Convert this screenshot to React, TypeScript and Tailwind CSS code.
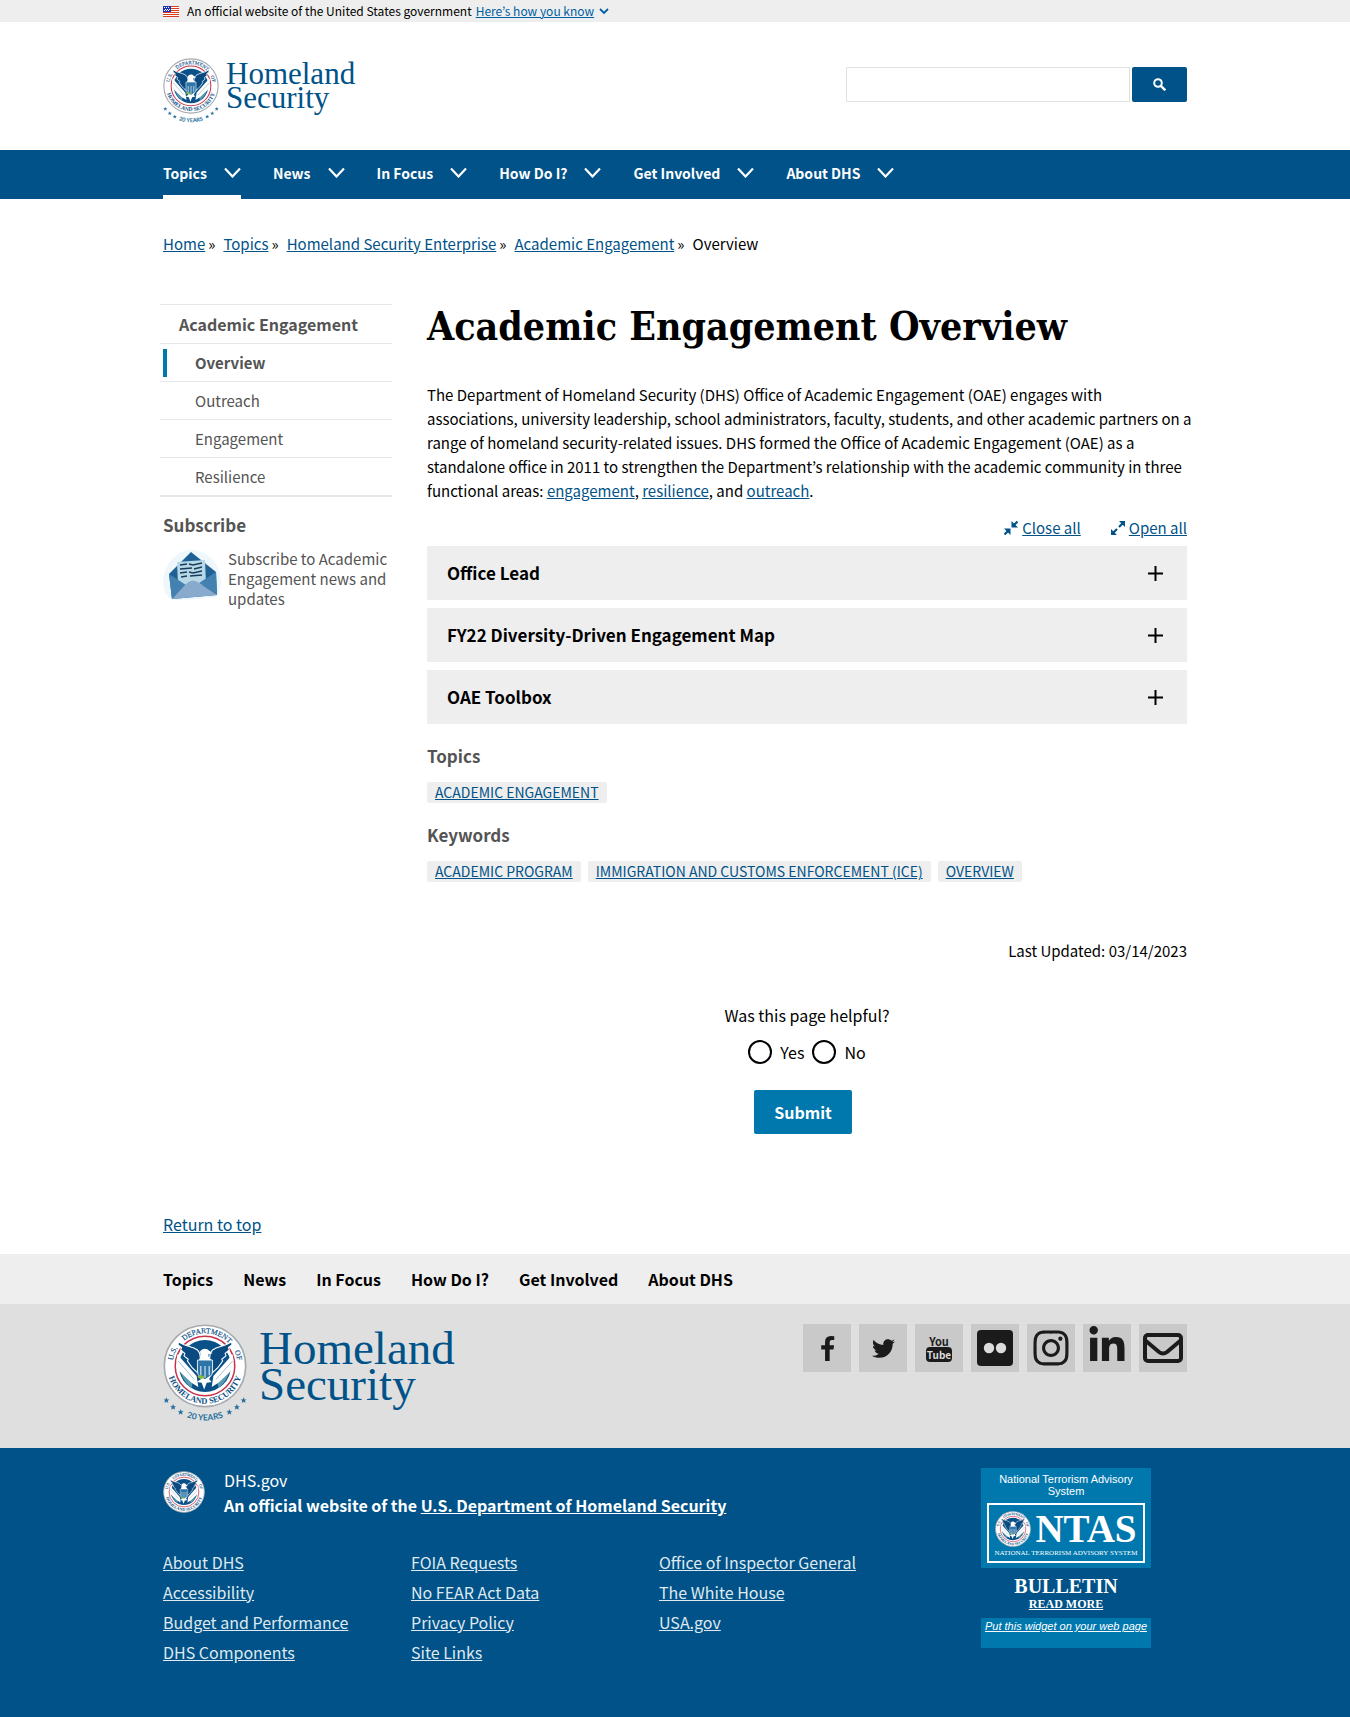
import { useId } from "react";
import type { ReactNode } from "react";
import { FaTwitter, FaInstagram, FaLinkedinIn } from "react-icons/fa";

const topics = ["Topics", "News", "In Focus", "How Do I?", "Get Involved", "About DHS"];
const crumbs = ["Home", "Topics", "Homeland Security Enterprise", "Academic Engagement"];
const linkColumns = [
  ["About DHS", "Accessibility", "Budget and Performance", "DHS Components"],
  ["FOIA Requests", "No FEAR Act Data", "Privacy Policy", "Site Links"],
  ["Office of Inspector General", "The White House", "USA.gov"],
];

function Seal({ className, years = false }: { className: string; years?: boolean }) {
  const id = useId();
  return (
    <svg className={className} viewBox={years ? "0 0 100 118" : "0 0 100 100"} role="img" aria-label="U.S. Department of Homeland Security seal">
      <defs>
        <path id={`${id}t`} d="M50 89a39 39 0 0 1 0-78a39 39 0 0 1 0 78" />
        <path id={`${id}b`} d="M5 50a45 45 0 0 0 90 0" />
        <path id={`${id}y`} d="M-15 50a65 65 0 0 0 130 0" />
      </defs>
      <circle cx="50" cy="50" r="48.5" fill="#fff" stroke="#a7abaf" strokeWidth="2" />
      <circle cx="50" cy="50" r="35.5" fill="#fff" stroke="#c8324a" strokeWidth="1.8" />
      <circle cx="50" cy="50" r="31" fill="#0b5189" />
      <path d="M20 52c8 2 12 10 16 14l-2 10c-8-6-13-15-14-24zM80 52c-8 2-12 10-16 14l2 10c8-6 13-15 14-24z" fill="#5b9bb0" />
      <path d="M17 36 40 62l2 13-8-5-15-14-3-12zM83 36 60 62l-2 13 8-5 15-14 3-12z" fill="#fff" />
      <path d="M18 44l19 22M83 44 63 66" stroke="#8fb1ca" strokeWidth="1" />
      <path d="M18 21c8 6 16 5 23 10 4 4 4 9 3 15l-3 12c-5-4-9-9-12-14l1-2-5-4 1-3-5-4 1-3-4-3zM82 21c-8 6-16 5-23 10-4 4-4 9-3 15l3 12c5-4 9-9 12-14l-1-2 5-4-1-3 5-4-1-3 4-3z" fill="#0a4a80" stroke="#fff" strokeWidth="1.3" />
      <path d="M43 43c2-4 2-7 1-10 2-4 8-5 11-1l4 3-5 1c0 3 1 5 4 7l-8 4z" fill="#fff" />
      <path d="M41 43h18v13c0 6-5 9-9 11-4-2-9-5-9-11z" fill="#2d74a8" stroke="#fff" strokeWidth="1" />
      <path d="M45 50v11M50 50v14M55 50v11" stroke="#d5e5ef" strokeWidth="1.4" />
      <path d="m44 62 6 4 7-5-2 5 3 3-6 1-3 8-3-8-6-1 5-3z" fill="#fff" />
      <path d="M41 63c3-3 7-2 9 1-3 2-7 2-9-1z" fill="#86b840" />
      <g fill="#0b4f86" fontFamily="'Liberation Serif', serif" textAnchor="middle">
        <g fontSize="9" stroke="#0b4f86" strokeWidth="0.2">
          <text><textPath href={`#${id}t`} startOffset="51%">DEPARTMENT</textPath></text>
          <text><textPath href={`#${id}t`} startOffset="31%">U.S.</textPath></text>
          <text><textPath href={`#${id}t`} startOffset="70%">OF</textPath></text>
        </g>
        <text fontSize="10" fontWeight="700"><textPath href={`#${id}b`} startOffset="50%">HOMELAND SECURITY</textPath></text>
      </g>
      {years && (
        <g fill="#27709d">
          <text fontFamily="Lato, sans-serif" fontWeight="700" fontSize="10" textAnchor="middle">
            <textPath href={`#${id}y`} startOffset="50%">20 YEARS</textPath>
          </text>
          {[[4, 91], [12, 99], [21, 105], [96, 91], [88, 99], [79, 105]].map(([x, y]) => (
            <path key={x} transform={`translate(${x} ${y})`} d="M0-3.6 1.1-1.1h2.5L1.6.5 2.2 3.1 0 1.6-2.2 3.1-1.6.5-3.6-1.1H-1.1z" />
          ))}
        </g>
      )}
    </svg>
  );
}

function Flag() {
  return (
    <svg className="h-[11px] w-4" viewBox="0 0 16 11" aria-hidden="true">
      <path fill="#fff" d="M0 0h16v11H0z" />
      <path stroke="#db3e1f" d="M0 .5h16M0 2.5h16M0 4.5h16M0 6.5h16M0 8.5h16M0 10.5h16" />
      <path fill="#1e33b1" d="M0 0h8v6H0z" />
      <path stroke="#fff" strokeDasharray="1 1" d="M1 1.5h6M2 3.5h5M1 4.5h6" />
    </svg>
  );
}

function Envelope() {
  return (
    <svg className="h-[52px] w-[59px] shrink-0" viewBox="0 0 59 52" aria-hidden="true">
      <path d="M2 22C8 6 20 0 30 1s24 8 27 24-2 24-10 24-30 4-38 1S-2 34 2 22z" fill="#eef7fc" />
      <path d="M28 3 6 25l3 25 45-4-1-23z" fill="#1f6195" />
      <path d="m14 13 28-2 1 24-13 6-15-6z" fill="#b9d8e6" />
      <path d="m17 16 7-1M26 15l4 1 9-2M17 20l12-1M31 20l8-2M17 24l7-1M26 23l4 1 9-2M18 28l6-1M27 27l12-1" stroke="#163d5c" strokeWidth="1.4" fill="none" />
      <path d="m6 25 17 11L9 50zM53 23 36 34l18 12z" fill="#4481b0" />
      <path d="M9 50 24 34q6-5 12 0l18 12z" fill="#88abcd" />
    </svg>
  );
}

function Chevron() {
  return (
    <svg className="h-[11px] w-[17px]" viewBox="0 0 17 11" fill="none" stroke="currentColor" strokeWidth="2.2" aria-hidden="true">
      <path d="m1 1.5 7.5 8L16 1.5" />
    </svg>
  );
}

function DiagonalArrows({ inward = false }: { inward?: boolean }) {
  return (
    <svg className="h-3.5 w-3.5" viewBox="0 0 14 14" fill="#005288" stroke="#005288" strokeWidth="2.2" aria-hidden="true">
      {inward ? (
        <>
          <path d="m13.5.5-4 4M.5 13.5l4-4" />
          <path stroke="none" d="M7.5 0v6.5H14zM6.5 14V7.5H0z" />
        </>
      ) : (
        <>
          <path d="m12 2-4 4M2 12l4-4" />
          <path stroke="none" d="M8 0h6v6zM6 14H0V8z" />
        </>
      )}
    </svg>
  );
}

function Tag({ children }: { children: string }) {
  return (
    <a href="#" className="rounded-xs bg-[#eee] px-2 text-[14px] leading-[21px] text-[#005288] uppercase underline">
      {children}
    </a>
  );
}

const social = [
  {
    name: "Facebook",
    icon: (
      <svg className="size-[27px]" viewBox="0 -64 1792 1792" fill="currentColor" aria-hidden="true">
        <path d="M1343 12v264h-157q-86 0-116 36t-30 108v189h293l-39 296h-254v759H734V905H479V609h255V391q0-186 104-288.500T1115 0q147 0 228 12z" />
      </svg>
    ),
  },
  { name: "Twitter", icon: <FaTwitter className="size-[23px]" /> },
  {
    name: "YouTube",
    icon: (
      <span className="flex flex-col items-center text-[11px] leading-3 font-bold" aria-hidden="true">
        <span>You</span>
        <span className="rounded-sm bg-[#1b1b1b] px-px text-[10px] leading-[15px] text-[#dcdcdc]">Tube</span>
      </span>
    ),
  },
  {
    name: "Flickr",
    icon: (
      <svg className="size-9" viewBox="0 0 36 36" aria-hidden="true">
        <rect width="36" height="36" rx="4" fill="#1b1b1b" />
        <circle cx="12" cy="18" r="5.2" fill="#dcdcdc" />
        <circle cx="24" cy="18" r="5.2" fill="#dcdcdc" />
      </svg>
    ),
  },
  { name: "Instagram", icon: <FaInstagram className="size-10" /> },
  { name: "LinkedIn", icon: <FaLinkedinIn className="mb-1 size-10" /> },
  {
    name: "Email",
    icon: (
      <svg className="h-[30px] w-10" viewBox="0 0 40 30" fill="none" stroke="#1b1b1b" strokeWidth="4" strokeLinejoin="round" aria-hidden="true">
        <rect x="2" y="2" width="36" height="26" rx="3" />
        <path d="m3 8 13 11q4 3 8 0L37 8" />
      </svg>
    ),
  },
];

function Wrap({ children, className = "" }: { children: ReactNode; className?: string }) {
  return <div className={`mx-auto max-w-5xl ${className}`}>{children}</div>;
}

export default function App() {
  return (
    <div className="bg-white font-['Noto_Sans_CJK_KR',sans-serif] text-[15px] leading-6 text-black">
      <div className="bg-[#eee]">
        <Wrap className="flex items-center text-[12px] leading-[22px]">
          <Flag />
          <span className="ml-2">An official website of the United States government</span>
          <button className="ml-1 flex items-center gap-1 text-[#005ea2]">
            <span className="underline">Here’s how you know</span>
            <svg className="h-2 w-3" viewBox="0 0 12 8" fill="none" stroke="currentColor" strokeWidth="1.8" aria-hidden="true">
              <path d="m2 2 4 4 4-4" />
            </svg>
          </button>
        </Wrap>
      </div>

      <header>
        <Wrap className="flex h-32 items-start justify-between pt-9">
          <a href="#" className="flex gap-[7px] text-[#005288]">
            <Seal years className="h-[66px] w-14" />
            <span className="mt-1 font-['Liberation_Serif',serif] text-[31px] leading-6">
              Homeland
              <br />
              Security
            </span>
          </a>
          <form className="mt-[9px] flex gap-0.5" onSubmit={(e) => e.preventDefault()}>
            <input aria-label="Search" className="h-[35px] w-[284px] border border-[#dfe1e2] px-2" />
            <button aria-label="Search" className="flex h-[35px] w-[55px] items-center justify-center rounded-xs bg-[#005288] text-white">
              <svg className="size-[13px]" viewBox="0 0 13 13" fill="none" stroke="currentColor" strokeWidth="2" aria-hidden="true">
                <circle cx="5" cy="5" r="3.8" />
                <path d="m7.800 7.800 4.500 4.500" strokeWidth="2.4" />
              </svg>
            </button>
          </form>
        </Wrap>
        <nav className="bg-[#005288]" aria-label="Primary">
          <Wrap className="flex gap-8">
            {topics.map((t, i) => (
              <button
                key={t}
                className={`flex h-[49px] items-center gap-[17px] border-b-4 text-[14px] font-bold text-white ${i === 0 ? "border-white" : "border-transparent"}`}
              >
                {t}
                <Chevron />
              </button>
            ))}
          </Wrap>
        </nav>
      </header>

      <Wrap>
        <nav aria-label="Breadcrumb" className="flex pt-[33px]">
          {crumbs.map((c) => (
            <span key={c} className="mr-2">
              <a href="#" className="text-[#005288] underline">{c}</a>
              <span className="ml-[3px]">»</span>
            </span>
          ))}
          <span>Overview</span>
        </nav>

        <div className="mt-12 grid grid-cols-[229px_1fr] gap-x-[35px]">
          <aside className="text-[#545454]">
            <ul className="-ml-[3px] border-t border-b-2 border-[#e6e7e8]">
              <li className="flex h-[38px] items-center pl-[19px] text-[16px] font-bold">
                <a href="#">Academic Engagement</a>
              </li>
              {["Overview", "Outreach", "Engagement", "Resilience"].map((s, i) => (
                <li key={s} className="flex h-[38px] items-center border-t border-[#e6e7e8] pl-[3px]">
                  <a href="#" className={`border-l-4 pl-7 leading-7 ${i === 0 ? "border-[#0078ae] font-bold" : "border-transparent"}`}>
                    {s}
                  </a>
                </li>
              ))}
            </ul>
            <h2 className="mt-4 text-[17px] font-bold">Subscribe</h2>
            <a href="#" className="mt-3 flex gap-1.5 leading-5">
              <Envelope />
              <span>Subscribe to Academic Engagement news and updates</span>
            </a>
          </aside>

          <main>
            <h1 className="font-['DejaVu_Serif_Condensed','DejaVu_Serif',serif] text-[39px] leading-[44px] font-bold">
              Academic Engagement Overview
            </h1>
            <p className="mt-[35px] -mr-2">
              The Department of Homeland Security (DHS) Office of Academic Engagement (OAE) engages with associations, university leadership, school administrators, faculty, students, and other academic partners on a range of homeland security-related issues. DHS formed the Office of Academic Engagement (OAE) as a standalone office in 2011 to strengthen the Department’s relationship with the academic community in three functional areas:{" "}
              <a href="#" className="text-[#005288] underline">engagement</a>,{" "}
              <a href="#" className="text-[#005288] underline">resilience</a>, and{" "}
              <a href="#" className="text-[#005288] underline">outreach</a>.
            </p>
            <div className="mt-[13px] flex justify-end gap-[30px] text-[#005288]">
              <button className="flex items-center gap-1">
                <DiagonalArrows inward />
                <span className="underline">Close all</span>
              </button>
              <button className="flex items-center gap-1">
                <DiagonalArrows />
                <span className="underline">Open all</span>
              </button>
            </div>
            <div className="mt-[6px] flex flex-col gap-2">
              {["Office Lead", "FY22 Diversity-Driven Engagement Map", "OAE Toolbox"].map((t) => (
                <h2 key={t}>
                  <button className="flex h-[54px] w-full items-center justify-between bg-[#eee] pr-6 pl-5 text-[17px] font-bold">
                    {t}
                    <svg className="size-[15px]" viewBox="0 0 15 15" stroke="#000" strokeWidth="2" aria-hidden="true">
                      <path d="M7.500 0v15M0 7.500h15" />
                    </svg>
                  </button>
                </h2>
              ))}
            </div>
            <h2 className="mt-5 text-[17px] font-bold text-[#545454]">Topics</h2>
            <div className="mt-[14px] flex gap-[7px]">
              <Tag>Academic Engagement</Tag>
            </div>
            <h2 className="mt-5 text-[17px] font-bold text-[#545454]">Keywords</h2>
            <div className="mt-[14px] flex gap-[7px]">
              <Tag>Academic Program</Tag>
              <Tag>Immigration and Customs Enforcement (ICE)</Tag>
              <Tag>Overview</Tag>
            </div>
            <p className="mt-[57px] text-right">Last Updated: 03/14/2023</p>
            <form className="mt-10 flex flex-col items-center" onSubmit={(e) => e.preventDefault()}>
              <fieldset className="text-[16px]">
                <legend>Was this page helpful?</legend>
                <div className="mt-[13px] flex justify-center gap-2">
                  {["Yes", "No"].map((v) => (
                    <label key={v} className="flex items-center gap-2">
                      <input type="radio" name="helpful" className="size-6 appearance-none rounded-full border-2 border-black bg-white" />
                      {v}
                    </label>
                  ))}
                </div>
              </fieldset>
              <button className="mt-[26px] mr-2 h-11 rounded-xs bg-[#0078ae] px-5 text-[16px] font-bold text-white">Submit</button>
            </form>
          </main>
        </div>
        <div className="mt-[78px] pb-[17px]">
          <a href="#" className="text-[16px] text-[#005288] underline">Return to top</a>
        </div>
      </Wrap>

      <footer>
        <nav className="bg-[#eee]" aria-label="Footer">
          <Wrap className="flex h-[50px] items-center gap-[30px] text-[16px] font-bold">
            {topics.map((t) => (
              <a key={t} href="#">{t}</a>
            ))}
          </Wrap>
        </nav>
        <div className="bg-[#dfdfdf]">
          <Wrap className="flex h-36 items-start justify-between pt-5">
            <a href="#" className="flex gap-3 text-[#005288]">
              <Seal years className="h-[99px] w-[84px]" />
              <span className="mt-1.5 font-['Liberation_Serif',serif] text-[47px] leading-9">
                Homeland
                <br />
                Security
              </span>
            </a>
            <div className="flex gap-2">
              {social.map((s) => (
                <a key={s.name} href="#" aria-label={s.name} className="flex size-12 items-center justify-center bg-[#c9c9c9] text-[#1b1b1b]">
                  {s.icon}
                </a>
              ))}
            </div>
          </Wrap>
        </div>
        <div className="bg-[#005288] text-white">
          <Wrap className="flex justify-between pt-5 pb-[50px]">
            <div>
              <div className="flex gap-[19px] text-[16px] leading-[25px]">
                <Seal className="mt-[3px] size-[42px]" />
                <div>
                  <p>DHS.gov</p>
                  <p className="font-bold">
                    An official website of the <a href="#" className="underline">U.S. Department of Homeland Security</a>
                  </p>
                </div>
              </div>
              <div className="mt-[29px] grid grid-cols-[repeat(3,248px)] text-[16px] leading-[30px] text-[#dfe9f0]">
                {linkColumns.map((col) => (
                  <ul key={col[0]}>
                    {col.map((l) => (
                      <li key={l}>
                        <a href="#" className="underline">{l}</a>
                      </li>
                    ))}
                  </ul>
                ))}
              </div>
            </div>
            <section className="mr-9 w-[170px] text-center font-['Liberation_Sans',sans-serif] text-[11px] leading-3">
              <div className="h-[100px] bg-[#0078ae] px-1.5 pt-[5px]">
                <p>National Terrorism Advisory System</p>
                <div className="mt-1.5 h-[60px] border-2 border-white pt-1.5 font-['Liberation_Serif',serif]">
                  <div className="flex items-center justify-center gap-1">
                    <Seal className="size-[36px]" />
                    <span className="text-[39px] leading-9 font-bold">NTAS</span>
                  </div>
                  <p className="text-[7px] whitespace-nowrap">NATIONAL TERRORISM ADVISORY SYSTEM</p>
                </div>
              </div>
              <a href="#" className="flex h-[50px] flex-col items-center pt-2 font-['Liberation_Serif',serif] font-bold">
                <span className="text-[20px] leading-5">BULLETIN</span>
                <span className="text-[12px] leading-4 underline">READ MORE</span>
              </a>
              <div className="h-[30px] bg-[#0078ae] pt-0.5">
                <a href="#" className="italic underline">Put this widget on your web page</a>
              </div>
            </section>
          </Wrap>
        </div>
      </footer>
    </div>
  );
}
